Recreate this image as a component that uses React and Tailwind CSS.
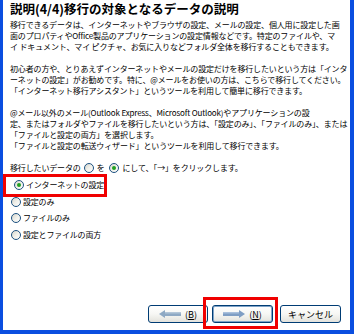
import React from "react";

const Radio = ({ checked }) => (
  <span className="inline-flex items-center justify-center w-[10px] h-[10px] rounded-full border border-[#1c5180] bg-gradient-to-br from-[#d4d4cc] via-[#f0f0ea] to-white shrink-0 align-middle">
    {checked && <span className="w-[4px] h-[4px] rounded-full bg-[#21a121]" />}
  </span>
);

const ArrowLeft = () => (
  <svg width="22" height="8" viewBox="0 0 22 8">
    <path d="M0 4 L6 0 L6 2 L22 2 L22 6 L6 6 L6 8 Z" fill="#8ea9c4" />
    <path d="M6 2 L22 2 L22 3.5 L6 3.5 Z" fill="#b3c6d8" />
  </svg>
);

const ArrowRight = () => (
  <svg width="22" height="8" viewBox="0 0 22 8">
    <path d="M22 4 L16 0 L16 2 L0 2 L0 6 L16 6 L16 8 Z" fill="#7f9ec4" />
    <path d="M0 2 L16 2 L16 3.5 L0 3.5 Z" fill="#a9c0dc" />
  </svg>
);

const btn =
  "flex items-center justify-center gap-[4px] h-[18px] rounded-[3px] border border-[#003c74] bg-gradient-to-b from-white via-[#f7f7f4] to-[#e3e2dc] text-[9px] leading-none text-black";

export default function App() {
  const lines1 = [
    "移行できるデータは、インターネットやブラウザの設定、メールの設定、個人用に設定した画",
    "面のプロパティやOffice製品のアプリケーションの設定情報などです。特定のファイルや、マ",
    "イ ドキュメント、マイ ピクチャ、お気に入りなどフォルダ全体を移行することもできます。",
  ];
  const lines2 = [
    "初心者の方や、とりあえずインターネットやメールの設定だけを移行したいという方は「インタ",
    "ーネットの設定」がお勧めです。特に、@メールをお使いの方は、こちらで移行してください。",
    "「インターネット移行アシスタント」というツールを利用して簡単に移行できます。",
  ];
  const lines3 = [
    "@メール以外のメール(Outlook Express、Microsoft Outlook)やアプリケーションの設",
    "定、またはフォルダやファイルを移行したいという方は、「設定のみ」、「ファイルのみ」、または",
    "「ファイルと設定の両方」を選択します。",
    "「ファイルと設定の転送ウィザード」というツールを利用して移行できます。",
  ];
  const Para = ({ lines }) => (
    <div>
      {lines.map((l, i) => (
        <div key={i} className="whitespace-nowrap h-[11px]">
          {l}
        </div>
      ))}
    </div>
  );
  return (
    <div className="w-[354px] h-[334px] bg-[#0a4ee0] pl-[3px] pr-[4px] pb-[4px] flex">
      <div className="flex-1 bg-white flex flex-col font-['Noto_Sans_CJK_JP','Noto_Sans',sans-serif] text-black overflow-hidden">
        <div className="pl-[7px] pt-[1px] text-[12.5px] font-bold leading-[16px] whitespace-nowrap">
          説明(4/4)移行の対象となるデータの説明
        </div>
        <div className="pl-[7px] mt-[2px] text-[8px] leading-[11px] tracking-[-0.15px] flex flex-col gap-[11px]">
          <Para lines={lines1} />
          <Para lines={lines2} />
          <Para lines={lines3} />
          <div className="flex items-center whitespace-nowrap h-[11px]">
            <span>移行したいデータの</span>
            <span className="mx-[3px] flex"><Radio /></span>
            <span>を</span>
            <span className="mx-[4px] flex"><Radio checked /></span>
            <span>にして、「→」をクリックします。</span>
          </div>
        </div>
        <div className="mt-[4px] flex flex-col text-[8px] tracking-[-0.2px]">
          {[
            ["インターネットの設定", true],
            ["設定のみ", false],
            ["ファイルのみ", false],
            ["設定とファイルの両方", false],
          ].map(([t, c], i) => (
            <div
              key={i}
              className={
                "flex items-center gap-[2px] h-[16.5px] pl-[8px] whitespace-nowrap " +
                (i === 0 ? "outline-[3px] outline-solid outline-[#f00000] w-[98px] ml-[3px] pl-[5px]" : "")
              }
            >
              <Radio checked={c} />
              <span>{t}</span>
            </div>
          ))}
        </div>
        <div className="mt-auto pb-[7px] pr-[9px] flex justify-end">
          <button className={btn + " w-[60px]"}>
            <ArrowLeft />
            <span>
              (<span className="underline">B</span>)
            </span>
          </button>
          <div className="relative ml-[4px]">
            <span className="absolute left-[-9px] right-[-5px] top-[-8px] bottom-[-6px] border-[3px] border-[#f00000] pointer-events-none" />
            <button className={btn + " w-[61px] shadow-[inset_0_0_0_1px_#7fa3c8]"}>
              <ArrowRight />
              <span>
                (<span className="underline">N</span>)
              </span>
            </button>
          </div>
          <button className={btn + " w-[61px] ml-[7px]"}>キャンセル</button>
        </div>
      </div>
    </div>
  );
}
